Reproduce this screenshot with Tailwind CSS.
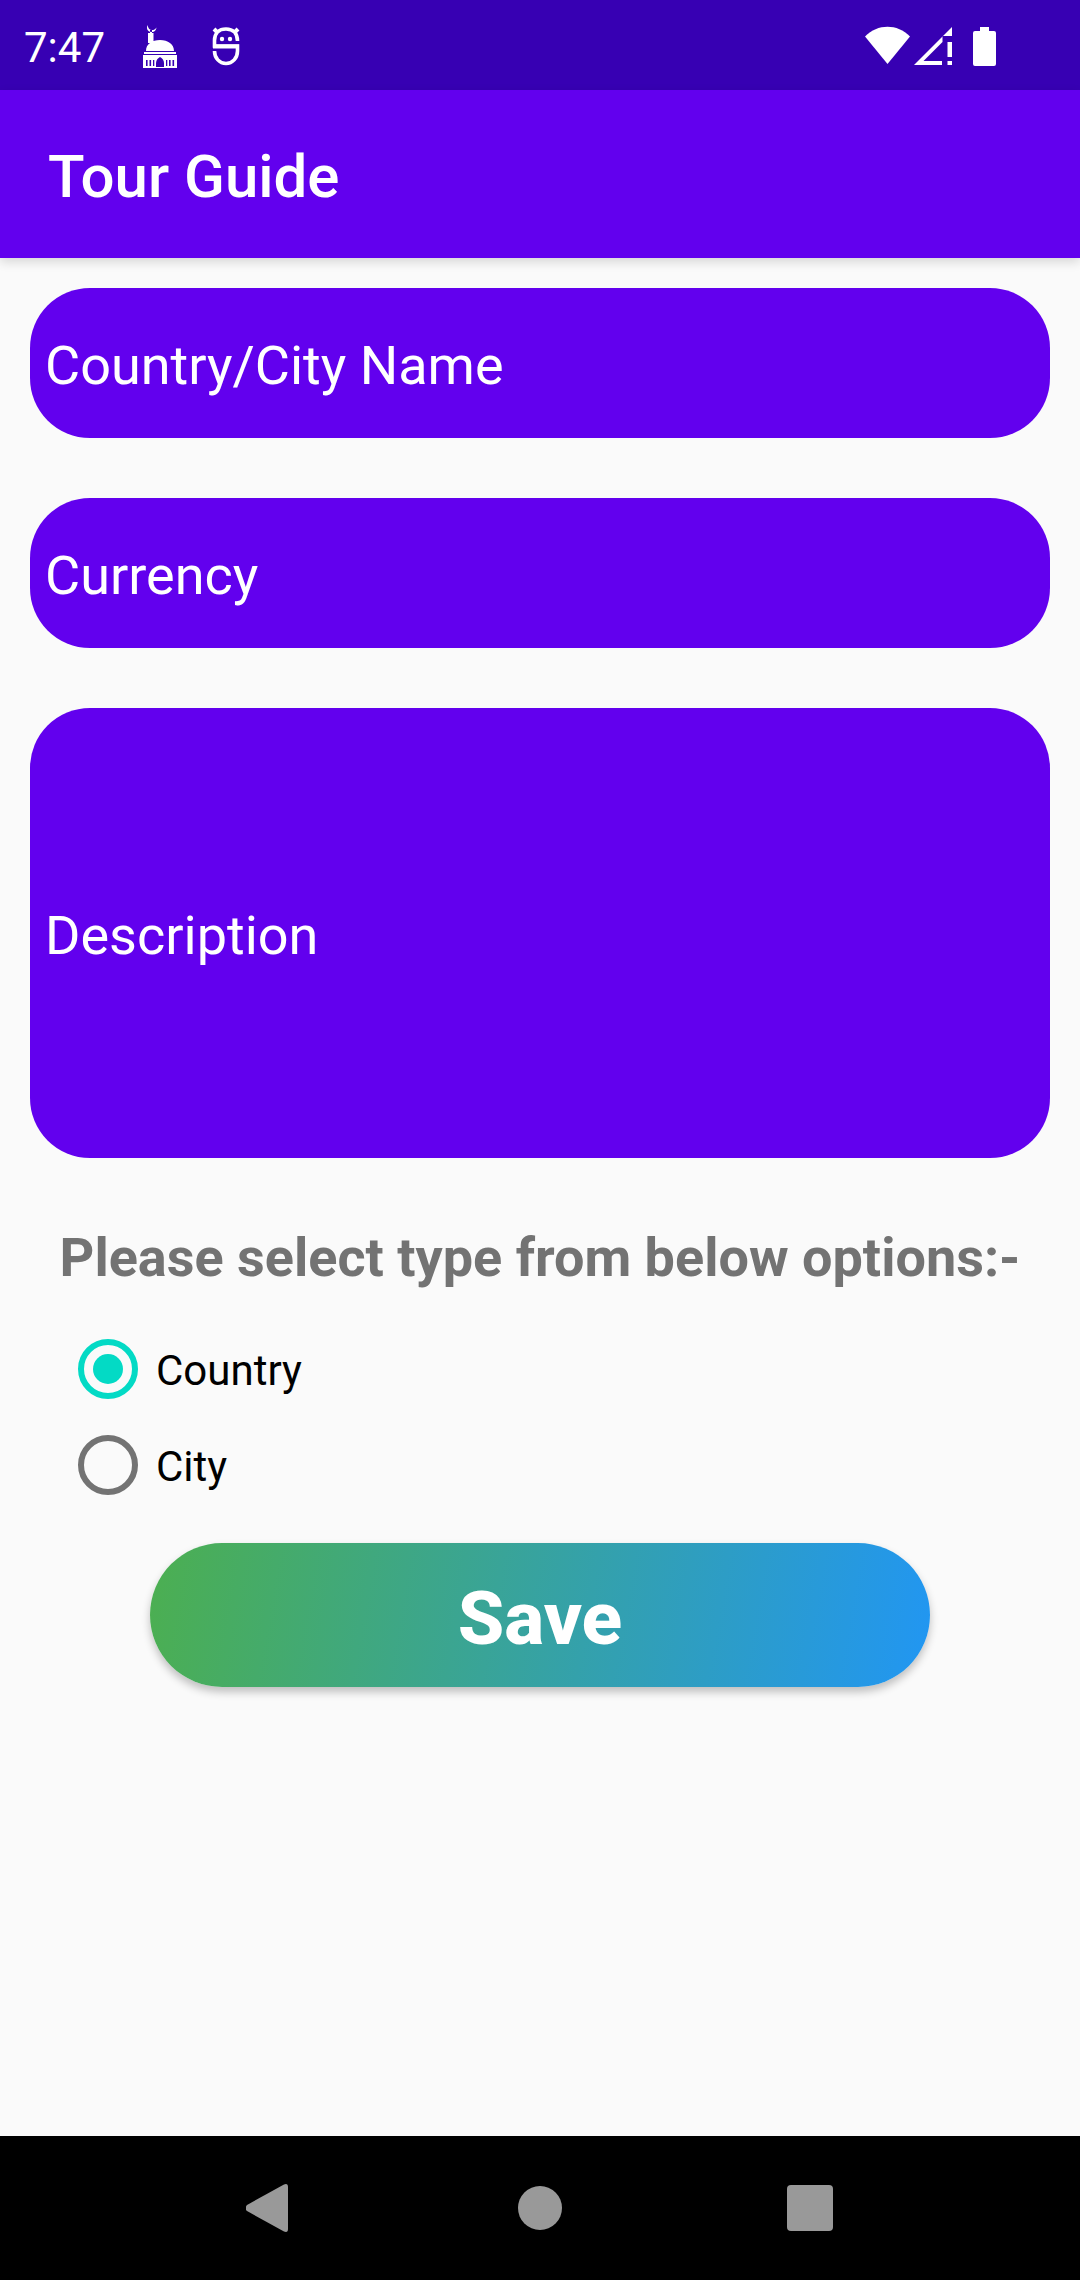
<!DOCTYPE html>
<html lang="en">
<head>
<meta charset="utf-8">
<meta name="viewport" content="width=device-width, initial-scale=1">
<title>Tour Guide</title>
<script src="https://cdn.jsdelivr.net/npm/@tailwindcss/browser@4"></script>
</head>
<body class="flex min-h-screen flex-col bg-[#fafafa] font-['Roboto',sans-serif]">
  <!-- System status bar -->
  <div class="flex h-[90px] items-center justify-between bg-[#3700b3] pt-0.5 pr-[84px] pl-6 text-white">
    <div class="flex items-center">
      <span class="w-[118px] pt-1 text-[42px] leading-[48px]">7:47</span>
      <svg class="h-[46px] w-9" viewBox="0 0 36 46" fill="none" aria-hidden="true">
        <path fill="#fff" d="M5.500 2C4 6 6 9 9.500 9S14 7 14.500 4.500C13 6.500 12 7 10 7 7.500 7 6 5 5.500 2zM8 7h2v4H8z"/>
        <path fill="#fff" d="M6 10h5.500v10H6zM4 28C4 21 10 17 18 17s14 4 14 11zM2 29h32v2H2zM1 32h34v13H1z"/>
        <g fill="#3700b3"><path d="M14 44v-4c0-3 2-5 4-6 2 1 4 3 4 6v4z"/>
        <rect x="4" y="37" width="1.600" height="6"/><rect x="7.500" y="37" width="1.600" height="6"/><rect x="11" y="37" width="1.300" height="6"/><rect x="24" y="37" width="1.300" height="6"/><rect x="27" y="37" width="1.600" height="6"/><rect x="30.500" y="37" width="1.600" height="6"/></g>
      </svg>
      <svg class="ml-[34px] h-10 w-7" viewBox="0 0 28 40" fill="none" stroke="#fff" stroke-width="3.600" aria-hidden="true">
        <path d="M25.500 15C25.500 7 21 3 14 3S2.500 7 2.500 14.500V20h23v5c0 7-5 12.500-11.500 12.500S2.500 32 2.500 25"/>
        <path stroke-width="4" d="M2 3l4 4M26 3l-4 4"/>
        <path d="M1 20.500h26" stroke-width="4"/>
        <circle cx="10" cy="13" r="2.200" fill="#fff" stroke="none"/><circle cx="18" cy="13" r="2.200" fill="#fff" stroke="none"/>
      </svg>
    </div>
    <div class="flex items-center">
      <svg class="h-10 w-[45px]" viewBox="0 0 46 40" preserveAspectRatio="none" fill="#fff" aria-hidden="true"><path d="M0 10.500C13-2.500 33-2.500 46 10.500L23 38z"/></svg>
      <svg class="ml-1 h-10 w-[38px]" viewBox="0 0 38 40" fill="#fff" aria-hidden="true"><path fill-rule="evenodd" d="M0 39 38 1v9H28.500v6L9.500 35H28v4z"/><path d="M33.500 16H38v15h-4.500zM33.500 35H38v4h-4.500z"/></svg>
      <svg class="ml-[21px] h-10 w-[23px]" viewBox="0 0 23 40" fill="#fff" aria-hidden="true"><path d="M7 1h9v4h5q2 0 2 2v31q0 2-2 2H2q-2 0-2-2V7q0-2 2-2h5z"/></svg>
    </div>
  </div>

  <header class="flex h-[168px] items-center bg-[#6200ee] px-12 shadow-[0_4px_10px_rgba(0,0,0,0.14)]">
    <h1 class="pt-1.5 text-[60px] leading-[70px] font-medium text-white">Tour Guide</h1>
  </header>

  <main class="flex-1 px-[30px] pt-[30px]">
    <form class="flex flex-col">
      <div class="flex flex-col gap-[60px]">
        <input type="text" aria-label="Country/City Name" placeholder="Country/City Name" class="h-[150px] w-full rounded-[60px] bg-[#6200ee] px-[15px] pt-1 text-[54px] text-white outline-none placeholder:text-white placeholder:opacity-100">
        <input type="text" aria-label="Currency" placeholder="Currency" class="h-[150px] w-full rounded-[60px] bg-[#6200ee] px-[15px] pt-1 text-[54px] text-white outline-none placeholder:text-white placeholder:opacity-100">
        <textarea aria-label="Description" placeholder="Description" class="block h-[450px] w-full resize-none rounded-[60px] bg-[#6200ee] px-[15px] pt-[196px] text-[54px] leading-[64px] text-white outline-none placeholder:text-white placeholder:opacity-100"></textarea>
      </div>

      <fieldset class="mt-[68px]">
        <legend class="w-full text-center text-[54px] leading-[64px] font-bold text-[#737373]">Please select type from below options:-</legend>
        <div class="mt-[31px] flex flex-col pl-12">
          <label class="flex h-24 items-center gap-[18px] text-[42px] leading-[48px] text-black">
            <input type="radio" name="type" checked class="size-[60px] appearance-none rounded-full border-[6px] border-[#737373] bg-clip-content p-[9px] checked:border-[#03dac5] checked:bg-[#03dac5]">
            <span class="pt-1">Country</span>
          </label>
          <label class="flex h-24 items-center gap-[18px] text-[42px] leading-[48px] text-black">
            <input type="radio" name="type" class="size-[60px] appearance-none rounded-full border-[6px] border-[#737373] bg-clip-content p-[9px] checked:border-[#03dac5] checked:bg-[#03dac5]">
            <span class="pt-1">City</span>
          </label>
        </div>
      </fieldset>

      <button type="button" class="mx-[120px] mt-[30px] h-36 rounded-full bg-[linear-gradient(100deg,#4caf50,#2196f3)] pt-1.5 text-[75px] leading-[88px] font-extrabold text-white shadow-[0_5px_8px_rgba(0,0,0,0.24)]">Save</button>
    </form>
  </main>

  <!-- System navigation: centres spaced a quarter of the width apart -->
  <nav class="grid h-36 grid-cols-[1fr_2fr_2fr_2fr_1fr] items-center bg-black" aria-label="System">
    <button type="button" aria-label="Back" class="col-start-2 justify-self-center"><svg class="h-12 w-[48px]" viewBox="0 0 48 48" fill="#999"><path d="M38 .500Q42-1 42 3v42q0 4-4 2.500L1 27q-3-3 0-6z"/></svg></button>
    <button type="button" aria-label="Home" class="size-11 justify-self-center rounded-full bg-[#999]"></button>
    <button type="button" aria-label="Recents" class="size-[46px] justify-self-center rounded-[4px] bg-[#999]"></button>
  </nav>
</body>
</html>
